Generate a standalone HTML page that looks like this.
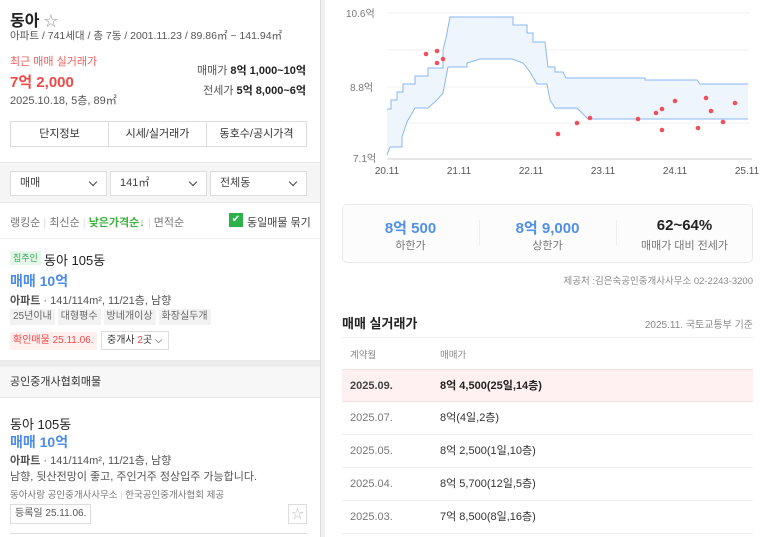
<!DOCTYPE html>
<html><head><meta charset="utf-8"><style>
*{margin:0;padding:0;box-sizing:border-box}
body{width:760px;height:537px;overflow:hidden;background:#fff;font-family:"Liberation Sans","Noto Sans CJK KR",sans-serif;color:#222;position:relative}
.a{position:absolute;white-space:nowrap}
.L{position:absolute;left:0;top:0;width:320px;height:537px;background:#fff}
.div{position:absolute;left:320px;top:0;width:5px;height:537px;background:#efefef;border-left:1px solid #ddd}
.btn{position:absolute;top:121px;height:26px;border:1px solid #ddd;font-size:11px;text-align:center;line-height:24px;color:#333;background:#fff}
.sel{position:absolute;top:171px;height:25px;border:1px solid #ddd;background:#fff;font-size:11px;line-height:23px;padding-left:9px;color:#444}
.sel:after{content:"";position:absolute;right:10px;top:7px;width:5px;height:5px;border-right:1.5px solid #444;border-bottom:1.5px solid #444;transform:rotate(45deg)}
.tag{display:inline-block;background:#f2f2f2;color:#666;font-size:10px;padding:0 3px;height:16px;line-height:16px;margin-right:3px}
.row{position:absolute;left:342px;width:411px;height:33px;border-bottom:1px solid #eee;font-size:11px;line-height:32px;color:#777}
.row span{position:absolute;left:98px;color:#333}
</style></head><body>
<div class="L">
<div class="a" style="left:10px;top:7px;font-size:16px;font-weight:bold">동아 <span style="font-weight:normal;color:#999;font-size:14px">☆</span></div>
<div class="a" style="left:10px;top:28px;font-size:10.5px;color:#555">아파트 / 741세대 / 총 7동 / 2001.11.23 / 89.86㎡ ~ 141.94㎡</div>
<div class="a" style="left:10px;top:53px;font-size:11px;color:#f25f5f">최근 매매 실거래가</div>
<div class="a" style="left:10px;top:71px;font-size:15px;font-weight:bold;color:#f04848">7억 2,000</div>
<div class="a" style="left:10px;top:92px;font-size:11px;color:#555">2025.10.18, 5층, 89㎡</div>
<div class="a" style="right:14px;top:62px;font-size:11px;color:#555">매매가 <b style="color:#222">8억 1,000~10억</b></div>
<div class="a" style="right:14px;top:82px;font-size:11px;color:#555">전세가 <b style="color:#222">5억 8,000~6억</b></div>
<div class="btn" style="left:10px;width:99px">단지정보</div>
<div class="btn" style="left:108px;width:99px">시세/실거래가</div>
<div class="btn" style="left:206px;width:101px">동호수/공시가격</div>
<div class="a" style="left:0;top:162px;width:320px;height:41px;background:#f5f5f5;border-top:1px solid #e8e8e8;border-bottom:1px solid #e8e8e8"></div>
<div class="sel" style="left:10px;width:97px">매매</div>
<div class="sel" style="left:110px;width:97px">141㎡</div>
<div class="sel" style="left:210px;width:97px">전체동</div>
<div class="a" style="left:10px;top:214px;font-size:11px;color:#777">랭킹순 <span style="color:#ddd">|</span> 최신순 <span style="color:#ddd">|</span> <span style="color:#3db13d;font-weight:bold">낮은가격순↓</span> <span style="color:#ddd">|</span> 면적순</div>
<div class="a" style="left:229px;top:213px;width:14px;height:14px;background:#2bb34a;color:#fff;font-size:10px;text-align:center;line-height:14px">✔</div>
<div class="a" style="left:247px;top:214px;font-size:11px;color:#444">동일매물 묶기</div>
<div class="a" style="left:0;top:238px;width:320px;border-top:1px solid #eee"></div>
<div class="a" style="left:10px;top:251px;font-size:9px;background:#e6f6ea;color:#2ea84e;padding:0 3px;height:14px;line-height:14px">집주인</div>
<div class="a" style="left:44px;top:250px;font-size:13px;color:#222">동아 105동</div>
<div class="a" style="left:10px;top:271px;font-size:14px;color:#4c8be8;font-weight:bold">매매 10억</div>
<div class="a" style="left:10px;top:292px;font-size:11px;color:#555"><b>아파트</b> · 141/114m², 11/21층, 남향</div>
<div class="a" style="left:10px;top:306px"><span class="tag">25년이내</span><span class="tag">대형평수</span><span class="tag">방네개이상</span><span class="tag">화장실두개</span></div>
<div class="a" style="left:10px;top:332px;height:18px;line-height:18px;font-size:10px;color:#f04848;background:#fff0f0;padding:0 3px">확인매물 25.11.06.</div>
<div class="a" style="left:101px;top:331px;height:19px;line-height:17px;font-size:10px;color:#333;border:1px solid #ddd;padding:0 5px">중개사 <span style="color:#f04848">2</span>곳 ⌵</div>
<div class="a" style="left:0;top:360px;width:320px;height:7px;background:#ececec"></div>
<div class="a" style="left:0;top:367px;width:320px;height:31px;background:#f7f7f7;border-bottom:1px solid #e5e5e5;font-size:11px;line-height:31px;padding-left:10px;color:#333">공인중개사협회매물</div>
<div class="a" style="left:10px;top:414px;font-size:13px;color:#222">동아 105동</div>
<div class="a" style="left:10px;top:432px;font-size:14px;color:#4c8be8;font-weight:bold">매매 10억</div>
<div class="a" style="left:10px;top:452px;font-size:11px;color:#555"><b>아파트</b> · 141/114m², 11/21층, 남향</div>
<div class="a" style="left:10px;top:468px;font-size:11px;color:#555">남향, 뒷산전망이 좋고, 주인거주 정상입주 가능합니다.</div>
<div class="a" style="left:10px;top:487px;font-size:9.5px;color:#777">동아사랑 공인중개사사무소 <span style="color:#ddd">|</span> 한국공인중개사협회 제공</div>
<div class="a" style="left:10px;top:504px;height:20px;line-height:18px;border:1px solid #ddd;font-size:10px;color:#555;padding:0 4px">등록일 25.11.06.</div>
<div class="a" style="left:288px;top:504px;width:19px;height:20px;border:1px solid #ddd;font-size:12px;color:#bbb;text-align:center;line-height:18px">☆</div>
<div class="a" style="left:10px;top:533px;width:297px;border-top:1px solid #ddd"></div>
</div>
<div class="div"></div>

<svg class="a" style="left:330px;top:0" width="430" height="185" viewBox="330 0 430 185">
<g stroke="#f0f0f0" stroke-width="1"><line x1="387" y1="13" x2="750" y2="13"/><line x1="387" y1="50" x2="750" y2="50"/><line x1="387" y1="87" x2="750" y2="87"/><line x1="387" y1="123" x2="750" y2="123"/></g>
<line x1="387" y1="159" x2="752" y2="159" stroke="#ccc"/>
<path d="M387 109 H391 V100 H397 V92 H403 V84 H415 V76 H428 V68 H443 V50 L446 38 L450 17 H513 V25 H527 V33 H533 V42 H545 L548 67 H555 V72 H563 L566 78 H645 V80 H697 L700 84 H748 V119 H588 L577 110 H555 L550 100 V84 H537 L530 72 L523 63 L512 59 H480 L467 63 V67 H448 L443 93 L437 100 L428 108 H415 L407 122 L402 137 V147 H390 L387 155 Z" fill="#eef5fd" stroke="none"/>
<path d="M387 109 H391 V100 H397 V92 H403 V84 H415 V76 H428 V68 H443 V50 L446 38 L450 17 H513 V25 H527 V33 H533 V42 H545 L548 67 H555 V72 H563 L566 78 H645 V80 H697 L700 84 H748" fill="none" stroke="#8ab8f0" stroke-width="1"/>
<path d="M387 155 L390 147 H402 V137 L407 122 L415 108 H428 L437 100 L443 93 L448 67 H467 V63 L480 59 H512 L523 63 L530 72 L537 84 H547 L550 100 L555 108 H577 L588 119 H748" fill="none" stroke="#8ab8f0" stroke-width="1"/>
<g fill="#f0505a"><circle cx="426" cy="54" r="2.3"/><circle cx="437" cy="51" r="2.3"/><circle cx="437" cy="63" r="2.3"/><circle cx="443" cy="59" r="2.3"/><circle cx="558" cy="134" r="2.3"/><circle cx="577" cy="123" r="2.3"/><circle cx="590" cy="118" r="2.3"/><circle cx="638" cy="119" r="2.3"/><circle cx="656" cy="113" r="2.3"/><circle cx="662" cy="109" r="2.3"/><circle cx="662" cy="130" r="2.3"/><circle cx="675" cy="101" r="2.3"/><circle cx="698" cy="128" r="2.3"/><circle cx="706" cy="98" r="2.3"/><circle cx="711" cy="111" r="2.3"/><circle cx="723" cy="122" r="2.3"/><circle cx="735" cy="103" r="2.3"/></g>
<g font-size="10" fill="#777" font-family="Liberation Sans, Noto Sans CJK KR, sans-serif"><text x="346" y="17">10.6억</text><text x="350" y="91">8.8억</text><text x="353" y="162">7.1억</text>
<g fill="#555" text-anchor="middle"><text x="387" y="174">20.11</text><text x="459" y="174">21.11</text><text x="531" y="174">22.11</text><text x="603" y="174">23.11</text><text x="675" y="174">24.11</text><text x="747" y="174">25.11</text></g></g>
</svg>

<div class="a" style="left:342px;top:204px;width:411px;height:59px;border:1px solid #eaeaea;border-radius:5px;background:#fcfcfc"></div>
<div class="a" style="left:479px;top:220px;height:25px;border-left:1px solid #eee"></div>
<div class="a" style="left:616px;top:220px;height:25px;border-left:1px solid #eee"></div>
<div class="a" style="left:342px;top:217px;width:137px;text-align:center;font-size:15px;font-weight:bold;color:#5090e6">8억 500</div>
<div class="a" style="left:479px;top:217px;width:137px;text-align:center;font-size:15px;font-weight:bold;color:#5090e6">8억 9,000</div>
<div class="a" style="left:616px;top:217px;width:137px;text-align:center;font-size:15px;font-weight:bold;color:#222">62~64%</div>
<div class="a" style="left:342px;top:237px;width:137px;text-align:center;font-size:11px;color:#777">하한가</div>
<div class="a" style="left:479px;top:237px;width:137px;text-align:center;font-size:11px;color:#777">상한가</div>
<div class="a" style="left:616px;top:237px;width:137px;text-align:center;font-size:11px;color:#777">매매가 대비 전세가</div>
<div class="a" style="right:7px;top:273px;font-size:9.5px;color:#888">제공처 :김은숙공인중개사사무소 02-2243-3200</div>

<div class="a" style="left:342px;top:313px;font-size:13px;font-weight:bold;color:#222">매매 실거래가</div>
<div class="a" style="right:7px;top:316px;font-size:10px;color:#888">2025.11. 국토교통부 기준</div>
<div class="a" style="left:342px;top:337px;width:411px;border-top:1px solid #eee"></div>
<div class="a" style="left:350px;top:347px;font-size:9.5px;color:#888">계약월</div>
<div class="a" style="left:440px;top:347px;font-size:9.5px;color:#888">매매가</div>
<div class="row" style="top:369px;background:#fff1f1;border-top:1px solid #f5dede;border-bottom:1px solid #f5dede;padding-left:8px;color:#444;font-weight:bold">2025.09.<span style="font-weight:bold;color:#222">8억 4,500(25일,14층)</span></div>
<div class="row" style="top:402px;padding-left:8px">2025.07.<span>8억(4일,2층)</span></div>
<div class="row" style="top:435px;padding-left:8px">2025.05.<span>8억 2,500(1일,10층)</span></div>
<div class="row" style="top:468px;padding-left:8px">2025.04.<span>8억 5,700(12일,5층)</span></div>
<div class="row" style="top:501px;padding-left:8px">2025.03.<span>7억 8,500(8일,16층)</span></div>
</body></html>
